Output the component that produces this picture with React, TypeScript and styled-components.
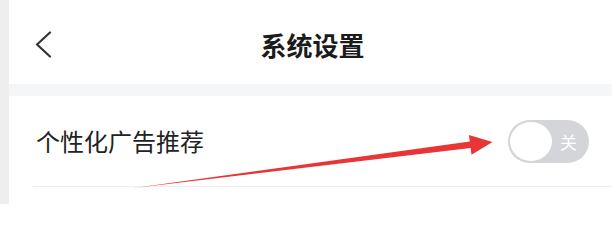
import React from "react";
import styled, { createGlobalStyle } from "styled-components";

const GlobalStyle = createGlobalStyle`
  html, body { margin: 0; padding: 0; background: #ffffff; }
  body { font-family: "Noto Sans CJK SC", "Noto Sans", sans-serif; }
`;

const Page = styled.div`
  position: relative;
  display: flex;
  width: 612px;
  height: 204px;
  overflow: hidden;
  background: #ffffff;
`;

const LeftStrip = styled.div`
  width: 9px;
  flex: 0 0 9px;
  background: #eeeeee;
`;

const Main = styled.div`
  flex: 1;
  display: flex;
  flex-direction: column;
`;

const Header = styled.div`
  height: 78px;
  padding-top: 6px;
  padding-left: 4px;
  display: grid;
  grid-template-columns: 1fr auto 1fr;
  align-items: center;
  background: #ffffff;
`;

const BackButton = styled.div`
  margin-left: 22px;
  width: 18px;
  height: 28px;
  display: flex;
  align-items: center;
`;

const Title = styled.div`
  font-size: 26px;
  font-weight: 700;
  color: #1b1b1b;
  line-height: 1;
  letter-spacing: 0;
`;

const Band = styled.div`
  height: 12px;
  background: #f5f6f8;
`;

const Row = styled.div`
  height: 90px;
  margin-left: 24px;
  padding-right: 23px;
  border-bottom: 1px solid #efefef;
  display: flex;
  align-items: center;
  justify-content: space-between;
`;

const RowLabel = styled.div`
  padding-left: 3px;
  font-size: 24px;
  color: #222222;
  line-height: 1;
`;

const Toggle = styled.div<{ $on?: boolean }>`
  position: relative;
  width: 81px;
  height: 43px;
  border-radius: 22px;
  background: ${(p) => (p.$on ? "#3a7afe" : "#d3d5d8")};
  display: flex;
  align-items: center;
  justify-content: flex-end;
  padding-right: 12px;
  box-sizing: border-box;
`;

const Knob = styled.div`
  position: absolute;
  left: 2px;
  top: 2px;
  width: 42px;
  height: 39px;
  border-radius: 50%;
  background: #ffffff;
`;

const ToggleText = styled.span`
  font-size: 17px;
  color: #ffffff;
  line-height: 1;
`;

const ArrowLayer = styled.svg`
  position: absolute;
  left: 0;
  top: 0;
  pointer-events: none;
`;

export default function App() {
  return (
    <>
      <GlobalStyle />
      <Page>
        <LeftStrip />
        <Main>
          <Header>
            <BackButton>
              <svg width="18" height="28" viewBox="0 0 18 28">
                <polyline
                  points="15,1.5 2,13.5 15,25.5"
                  fill="none"
                  stroke="#333333"
                  strokeWidth="2.2"
                  strokeLinecap="round"
                  strokeLinejoin="round"
                />
              </svg>
            </BackButton>
            <Title>系统设置</Title>
            <div />
          </Header>
          <Band />
          <Row>
            <RowLabel>个性化广告推荐</RowLabel>
            <Toggle>
              <Knob />
              <ToggleText>关</ToggleText>
            </Toggle>
          </Row>
        </Main>
        <ArrowLayer width="612" height="204" viewBox="0 0 612 204">
          <polygon
            points="134,188 469.8,141.6 468.9,134.9 492.5,142 471.5,154.7 470.6,148"
            fill="#e83535"
          />
        </ArrowLayer>
      </Page>
    </>
  );
}
